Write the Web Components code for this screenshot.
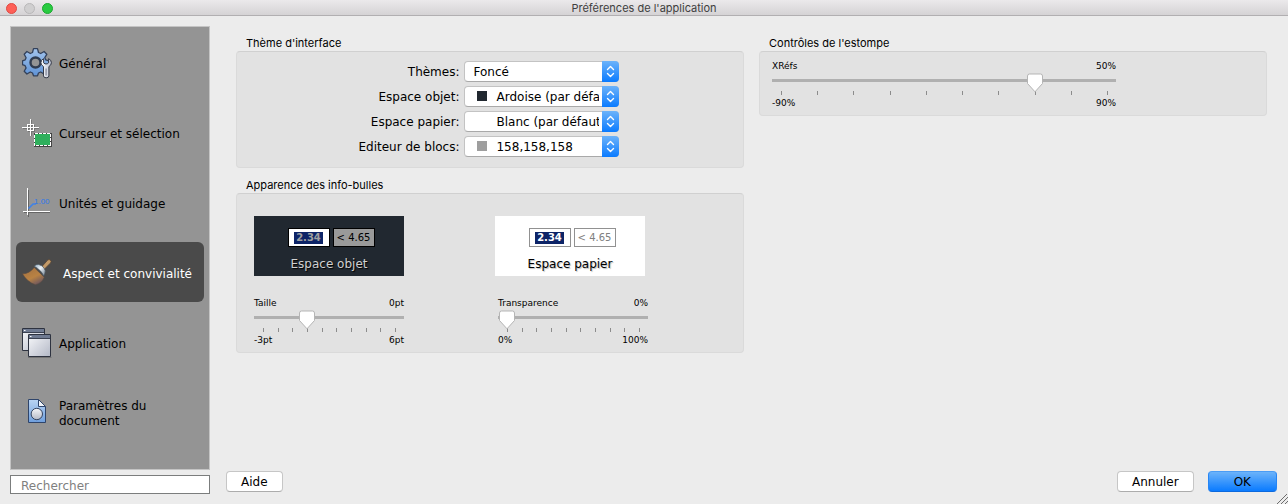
<!DOCTYPE html>
<html lang="fr">
<head>
<meta charset="utf-8">
<title>Préférences de l'application</title>
<style>
	html, body { height: 100%; }

	body {
		margin: 0;
		background: #ececec;
		color: #000;
		font: 12px/15px "DejaVu Sans", Verdana, sans-serif;
	}
</style>
</head>
<body>
<preferences-window caption="Préférences de l'application">
	<side-item slot="nav" icon="gear">Général</side-item>
	<side-item slot="nav" icon="cursor">Curseur et sélection</side-item>
	<side-item slot="nav" icon="units">Unités et guidage</side-item>
	<side-item slot="nav" icon="brush" selected>Aspect et convivialité</side-item>
	<side-item slot="nav" icon="windows">Application</side-item>
	<side-item slot="nav" icon="document">Paramètres du document</side-item>

	<settings-group slot="left" caption="Thème d'interface" layout="form">
		<color-select label="Thèmes:" value="Foncé"></color-select>
		<color-select label="Espace objet:" value="Ardoise (par défaut)" swatch="#212830"></color-select>
		<color-select label="Espace papier:" value="Blanc (par défaut)" swatch="#ffffff"></color-select>
		<color-select label="Editeur de blocs:" value="158,158,158" swatch="#9e9e9e"></color-select>
	</settings-group>

	<settings-group slot="left" caption="Apparence des info-bulles" layout="previews">
		<tooltip-preview theme="dark">Espace objet</tooltip-preview>
		<tooltip-preview theme="light">Espace papier</tooltip-preview>
		<tick-slider slot="controls" label="Taille" unit="pt" min="-3" max="6" value="0"></tick-slider>
		<tick-slider slot="controls" label="Transparence" unit="%" min="0" max="100" value="0"></tick-slider>
	</settings-group>

	<settings-group slot="right" caption="Contrôles de l'estompe" layout="sliders">
		<tick-slider label="XRéfs" unit="%" min="-90" max="90" value="50"></tick-slider>
	</settings-group>

	<push-button slot="help">Aide</push-button>
	<push-button slot="actions">Annuler</push-button>
	<push-button slot="actions" primary>OK</push-button>
</preferences-window>

<script>
const ICONS = {
	gear: /* html */ `
		<svg viewBox="0 0 30 32" width="30" height="32">
			<defs>
				<linearGradient id="g" x1="0" y1="0" x2="0" y2="1">
					<stop offset="0" stop-color="#a3c4ec"/><stop offset="1" stop-color="#5f93d6"/>
				</linearGradient>
				<linearGradient id="w" x1="0" y1="0" x2="1" y2="0">
					<stop offset="0" stop-color="#fff"/><stop offset="1" stop-color="#b9bfd0"/>
				</linearGradient>
			</defs>
			<path d="M11.5 1.7h4l1 3.8 2.2 1 3.4-2 2.7 2.8-2 3.4 1 2.2 3.2.9v3.9l-3.2 1-1 2.2 2 3.3-2.8 2.8-3.3-2-2.2 1-1 2.8h-4l-1-2.8-2.2-1-3.4 2-2.7-2.8 1.9-3.3-1-2.2-2.6-1v-3.9l2.6-.9 1-2.2-1.9-3.4 2.7-2.8 3.4 2 2.2-1z" fill="url(#g)" stroke="#33415a" stroke-width="1.3" stroke-linejoin="round"/>
			<circle cx="13.5" cy="15.5" r="5" fill="#949494" stroke="#303c50" stroke-width="2.4"/>
			<path d="M21.6 11.6v4.2l1.4 1.1h2.2l1.4-1.1v-4.2q2.8 1.4 2.8 4.1 0 2.4-2.5 3.9v9.3q0 1.9-2.7 1.9t-2.7-1.9v-9.3q-2.6-1.5-2.6-3.9 0-2.7 2.7-4.1z" fill="url(#w)" stroke="#343947" stroke-width="1"/>
			<path d="M24.1 21.5v7" stroke="#8c91a1" stroke-width="1.4"/>
		</svg>`,
	cursor: /* html */ `
		<svg viewBox="0 0 30 32" width="30" height="32" fill="none" shape-rendering="crispEdges">
			<path d="M1 11.5h16M9.5 3v16M6.5 8.5h6v6h-6z" stroke="#555" opacity=".5"/>
			<path d="M0 10.5h17M8.5 2v17M5.5 7.5h6v6h-6z" stroke="#fff"/>
			<path d="M12.5 16.5h17v13h-17z" fill="#2faf5c" stroke="#444"/>
			<path d="M12.5 16.5h16v12h-16z" stroke="#444"/>
			<path d="M12.5 16.5h16v12h-16z" stroke="#fff" stroke-dasharray="3 1"/>
		</svg>`,
	units: /* html */ `
		<svg viewBox="0 0 30 32" width="30" height="32">
			<path d="M6.5 3v27M2 25.5h26" stroke="#666" stroke-width="1"/>
			<path d="M5.5 1v27M1 24.5h27" stroke="#fff" shape-rendering="crispEdges"/>
			<path d="M6.5 21.5l4.5-4.5H14" fill="none" stroke="#3f82e8" stroke-width="1.6"/>
			<text x="12" y="17" font-family="Liberation Sans, sans-serif" font-size="8" fill="#2f78e8">1.00</text>
		</svg>`,
	brush: /* html */ `
		<svg viewBox="0 0 30 32" width="30" height="32">
			<defs>
				<linearGradient id="b" x1=".2" y1=".2" x2=".7" y2="1">
					<stop offset="0" stop-color="#a97642"/><stop offset=".5" stop-color="#b98243"/><stop offset="1" stop-color="#6b5660"/>
				</linearGradient>
				<linearGradient id="m" x1="0" y1="0" x2="1" y2="1">
					<stop offset="0" stop-color="#8fa9bd"/><stop offset=".45" stop-color="#eef3f7"/><stop offset="1" stop-color="#74828f"/>
				</linearGradient>
			</defs>
			<path d="M19.5 10l6.1-6.8q1.4-1.3 2.7-.2 1.6 1.5.2 3L22 12.5z" fill="#c39a68" stroke="#5b4635" stroke-width=".8"/>
			<path d="M12.2 10.4Q7.5 16.7.5 16.8q2 4 5.5 6.700q4 3.500 7.500 4.200 6.500-1.500 8.700-7.500z" fill="url(#b)" stroke="#5d4b42" stroke-width=".6"/>
			<path d="M12.200 9.200q1.700-2.200 4.500-1.700 3.300.8 5.300 3.500 1.800 2.600.9 5.200l-1.200 2.800q-2.500-6-9.500-9.800z" fill="url(#m)" stroke="#4a5763" stroke-width=".7"/>
		</svg>`,
	windows: /* html */ `
		<svg viewBox="0 0 30 32" width="30" height="32">
			<defs>
				<linearGradient id="p" x1="0" y1="0" x2="1" y2="1">
					<stop offset="0" stop-color="#f8f9fb"/><stop offset="1" stop-color="#b3b8c6"/>
				</linearGradient>
			</defs>
			<path d="M.5 1.5h22v22H.5z" fill="url(#p)" stroke="#2e3340"/>
			<path d="M1 2h21v3H1z" fill="#6f7a91"/><path d="M1 5.500h21" stroke="#3b4252"/>
			<path d="M2 3.500h1.500" stroke="#fff"/>
			<path d="M6 30.500h23.500" stroke="#555" opacity=".5"/>
			<path d="M6.500 7.500h22v22h-22z" fill="url(#p)" stroke="#2e3340"/>
			<path d="M7 8h21v3H7z" fill="#6f7a91"/><path d="M7 11.500h21" stroke="#3b4252"/>
			<path d="M8 9.500h1.500" stroke="#fff"/>
		</svg>`,
	document: /* html */ `
		<svg viewBox="0 0 30 32" width="30" height="32">
			<defs>
				<linearGradient id="d" x1="0" y1="0" x2="0" y2="1">
					<stop offset="0" stop-color="#b9d4f3"/><stop offset="1" stop-color="#6f9fdd"/>
				</linearGradient>
				<linearGradient id="c" x1="0" y1="0" x2="0" y2="1">
					<stop offset="0" stop-color="#f4f5f8"/><stop offset="1" stop-color="#b4b9c6"/>
				</linearGradient>
			</defs>
			<path d="M6.500 2.500h10l7 7v16h-17z" fill="url(#d)" stroke="#2f456b" stroke-linejoin="round"/>
			<path d="M16.500 2.500v7h7z" fill="#f2f6fb" stroke="#2f456b" stroke-linejoin="round"/>
			<circle cx="14.800" cy="17" r="5.700" fill="url(#c)" stroke="#34435f"/>
		</svg>`
};

window.customElements.define(
	'preferences-window',
	class PreferencesWindow extends HTMLElement {
		constructor() {
			super();
			this.attachShadow({ mode: 'open' });

			const template = document.createElement('template');
			template.innerHTML = /* html */ `
				<style>
					* { box-sizing: border-box; }

					:host {
						display: flex;
						flex-direction: column;
						min-height: 100vh;
						background: #ececec;
					}

					header {
						display: grid;
						grid-template-columns: 1fr auto 1fr;
						align-items: center;
						height: 16px;
						padding: 0 6px;
						background: linear-gradient(#ebe9eb, #d5d3d5);
						border-bottom: 1px solid #b1afb1;
					}

					.lights { display: flex; gap: 7px; }

					.lights button {
						width: 11px;
						height: 11px;
						padding: 0;
						border: 1px solid #df4a43;
						border-radius: 50%;
						background: #fe5f57;
					}
					.lights .minimize { background: #d0cfd0; border-color: #b9b8b9; }
					.lights .zoom { background: #29cb41; border-color: #1aa82f; }

					h1 {
						margin: 0;
						padding-top: 1px;
						font: 11px/15px Inter, sans-serif;
						color: #404040;
					}

					.body {
						flex: 1;
						display: grid;
						grid-template-columns: 200px 1fr;
						gap: 16px;
						padding: 10px 11px 10px 10px;
					}

					aside { display: flex; flex-direction: column; gap: 5px; }

					nav {
						flex: 1;
						display: flex;
						flex-direction: column;
						gap: 10px;
						padding: 5px;
						border: 1px solid #c4c4c4;
						background: #949494;
					}

					input {
						width: 100%;
						height: 19px;
						padding: 2px 10px 0;
						border: 1px solid #7b7d7d;
						background: #fff;
						font: inherit;
						outline: none;
					}
					input::placeholder { color: #7f7f7f; opacity: 1; }

					main { display: flex; flex-direction: column; }

					.columns {
						flex: 1;
						display: grid;
						grid-template-columns: 1fr 1fr;
						gap: 15px;
						padding: 9px 10px 0;
					}

					.column { display: flex; flex-direction: column; gap: 9px; }

					footer {
						display: flex;
						justify-content: space-between;
						padding-bottom: 2px;
					}

					.actions { display: flex; gap: 14px; }

					.grip { position: absolute; right: 0; bottom: 0; }
				</style>
				<header>
					<div class="lights">
						<button aria-label="Fermer"></button>
						<button class="minimize" aria-label="Réduire"></button>
						<button class="zoom" aria-label="Agrandir"></button>
					</div>
					<h1>${ this.getAttribute('caption') }</h1>
				</header>
				<div class="body">
					<aside>
						<nav><slot name="nav"></slot></nav>
						<input type="search" placeholder="Rechercher" aria-label="Rechercher">
					</aside>
					<main>
						<div class="columns">
							<div class="column"><slot name="left"></slot></div>
							<div class="column"><slot name="right"></slot></div>
						</div>
						<footer>
							<slot name="help"></slot>
							<div class="actions"><slot name="actions"></slot></div>
						</footer>
					</main>
				</div>
				<svg class="grip" width="12" height="12" viewBox="0 0 12 12" fill="none">
					<path d="M1 12L11 2M5 12l7-7M9 12l3-3" stroke="#6e6e6e"/>
				</svg>
			`;
			this.shadowRoot.appendChild(template.content.cloneNode(true));
		}
	}
);

window.customElements.define(
	'side-item',
	class SideItem extends HTMLElement {
		constructor() {
			super();
			this.attachShadow({ mode: 'open' });

			const template = document.createElement('template');
			template.innerHTML = /* html */ `
				<style>
					:host { display: block; }

					button {
						display: flex;
						align-items: center;
						gap: 7px;
						width: 100%;
						height: 60px;
						padding: 2px 16px 0 6px;
						border: 0;
						border-radius: 6px;
						background: none;
						color: #000;
						font: inherit;
						text-align: left;
					}

					svg { flex: none; }

					span { padding-top: 2px; }

					:host([selected]) button {
						gap: 11px;
						padding-right: 0;
						background: #4a4a4a;
						color: #fff;
					}
				</style>
				<button ${ this.hasAttribute('selected') ? 'aria-current="page"' : '' }>
					${ ICONS[this.getAttribute('icon')] }
					<span><slot></slot></span>
				</button>
			`;
			this.shadowRoot.appendChild(template.content.cloneNode(true));
		}
	}
);

window.customElements.define(
	'settings-group',
	class SettingsGroup extends HTMLElement {
		constructor() {
			super();
			this.attachShadow({ mode: 'open' });

			const template = document.createElement('template');
			template.innerHTML = /* html */ `
				<style>
					:host { display: block; }

					h2 {
						margin: 0;
						padding-left: 10px;
						font: 11px/16px Inter, sans-serif;
					}

					.box {
						border: 1px solid #dadada;
						border-top-color: #d0d0d0;
						border-radius: 4px;
						background: #e2e2e2;
					}

					:host([layout="form"]) .content {
						display: grid;
						grid-template-columns: auto 155px;
						justify-content: center;
						gap: 4px 5px;
						padding: 9px 2px 10px 0;
					}

					:host([layout="previews"]) .content,
					:host([layout="previews"]) .controls {
						display: grid;
						grid-template-columns: 1fr 1fr;
						gap: 10px;
						padding: 22px 17px 0;
					}

					:host([layout="previews"]) .controls {
						gap: 16px;
						padding: 20px 17px 4px;
					}

					:host([layout="sliders"]) .content { padding: 7px 150px 4px 12px; }
				</style>
				<section>
					<h2>${ this.getAttribute('caption') }</h2>
					<div class="box">
						<div class="content"><slot></slot></div>
						<div class="controls"><slot name="controls"></slot></div>
					</div>
				</section>
			`;
			this.shadowRoot.appendChild(template.content.cloneNode(true));
		}
	}
);

window.customElements.define(
	'color-select',
	class ColorSelect extends HTMLElement {
		constructor() {
			super();
			this.attachShadow({ mode: 'open' });

			const swatch = this.getAttribute('swatch');

			const template = document.createElement('template');
			template.innerHTML = /* html */ `
				<style>
					:host { display: contents; }

					label { text-align: right; line-height: 23px; height: 21px; }

					.field {
						position: relative;
						height: 21px;
						box-sizing: border-box;
						border: 1px solid #c3c3c3;
						border-bottom-color: #a9a9a9;
						border-radius: 4px;
						background: #fff;
					}

					select {
						appearance: none;
						display: block;
						width: 100%;
						height: 19px;
						padding: 1px 19px 0 ${ swatch ? 31 : 8 }px;
						border: 0;
						background: none;
						color: inherit;
						font: inherit;
						outline: none;
						text-overflow: clip;
					}

					.swatch {
						position: absolute;
						left: 12px;
						top: 4px;
						width: 10px;
						height: 10px;
						background: ${ swatch || 'none' };
					}

					.arrows {
						position: absolute;
						top: -1px;
						right: -1px;
						border-radius: 0 4px 4px 0;
						background: linear-gradient(#6cb3fa, #0a7bff);
						pointer-events: none;
					}
				</style>
				<label for="select">${ this.getAttribute('label') }</label>
				<div class="field">
					<select id="select"><option>${ this.getAttribute('value') }</option></select>
					<span class="swatch"></span>
					<svg class="arrows" width="17" height="21" viewBox="0 0 17 21" fill="none">
						<path d="M5.500 8.500l3-3 3 3M5.500 12.500l3 3 3-3" stroke="#fff" stroke-width="1.400" stroke-linecap="round" stroke-linejoin="round"/>
					</svg>
				</div>
			`;
			this.shadowRoot.appendChild(template.content.cloneNode(true));
		}
	}
);

window.customElements.define(
	'tooltip-preview',
	class TooltipPreview extends HTMLElement {
		constructor() {
			super();
			this.attachShadow({ mode: 'open' });

			const template = document.createElement('template');
			template.innerHTML = /* html */ `
				<style>
					:host {
						display: flex;
						flex-direction: column;
						align-items: center;
						gap: 10px;
						box-sizing: border-box;
						width: 150px;
						height: 60px;
						padding-top: 12px;
						background: #fff;
						text-shadow: 1px 1px 1px #bbb;
						--edge: #919191;
						--value: #fff;
						--range: #fff;
						--range-text: #808080;
					}

					:host([theme="dark"]) {
						background: #212830;
						color: #d0d0d0;
						text-shadow: 1px 1px 1px #000;
						--edge: #000;
						--value: #a0a0a0;
						--range: #9a9a9a;
						--range-text: #000;
					}

					.tips {
						display: flex;
						gap: 3px;
						padding-left: 4px;
						font-size: 10px;
						line-height: 12px;
						text-shadow: none;
					}

					.tips span {
						box-sizing: border-box;
						display: flex;
						align-items: center;
						justify-content: center;
						width: 42px;
						height: 19px;
						border: 1px solid var(--edge);
						background: var(--range);
						color: var(--range-text);
					}

					.tips .value { background: #fff; }

					b {
						padding: 0 2px;
						background: #0d2467;
						color: var(--value);
					}
				</style>
				<div class="tips">
					<span class="value"><b>2.34</b></span>
					<span>&lt; 4.65</span>
				</div>
				<div><slot></slot></div>
			`;
			this.shadowRoot.appendChild(template.content.cloneNode(true));
		}
	}
);

window.customElements.define(
	'tick-slider',
	class TickSlider extends HTMLElement {
		constructor() {
			super();
			this.attachShadow({ mode: 'open' });

			const min = this.getAttribute('min');
			const max = this.getAttribute('max');
			const value = this.getAttribute('value');
			const unit = this.getAttribute('unit');

			const template = document.createElement('template');
			template.innerHTML = /* html */ `
				<style>
					:host {
						display: block;
						font-size: 9px;
						line-height: 15px;
					}

					:host([slot="controls"]) { width: 150px; }

					.row { display: flex; justify-content: space-between; }

					input {
						appearance: none;
						position: relative;
						display: block;
						width: 100%;
						height: 20px;
						margin: -1px 0 0;
						background: none;
					}

					input::-webkit-slider-runnable-track {
						height: 20px;
						background: linear-gradient(#b0b0b0, #b0b0b0) 0 6px / 100% 3px no-repeat;
					}

					input::-webkit-slider-thumb {
						appearance: none;
						width: 18px;
						height: 20px;
						background: url("data:image/svg+xml,%3Csvg xmlns='http://www.w3.org/2000/svg' width='18' height='20'%3E%3Cpath d='M3.5 1h11q2 0 2 2v7.5L9 18.8l-7.5-8.3V3q0-2 2-2z' fill='%23fff' stroke='%23b5b5b5'/%3E%3C/svg%3E") no-repeat;
					}

					.ticks {
						display: flex;
						justify-content: space-between;
						height: 4px;
						margin: -2px 0 1px;
						padding: 0 8px 0 9px;
					}

					.ticks i { width: 1px; background: #8c8c8c; }
				</style>
				<div class="row">
					<label for="range">${ this.getAttribute('label') }</label>
					<output for="range">${ value }${ unit }</output>
				</div>
				<input id="range" type="range" min="${ min }" max="${ max }" value="${ value }">
				<div class="ticks">${ '<i></i>'.repeat(10) }</div>
				<div class="row"><span>${ min }${ unit }</span><span>${ max }${ unit }</span></div>
			`;
			this.shadowRoot.appendChild(template.content.cloneNode(true));

			const input = this.shadowRoot.querySelector('input');
			const output = this.shadowRoot.querySelector('output');
			input.addEventListener('input', () => { output.textContent = input.value + unit; });
		}
	}
);

window.customElements.define(
	'push-button',
	class PushButton extends HTMLElement {
		constructor() {
			super();
			this.attachShadow({ mode: 'open' });

			const template = document.createElement('template');
			template.innerHTML = /* html */ `
				<style>
					:host { display: block; }

					button {
						height: 21px;
						padding: 1px 14px 0;
						border: 1px solid #c6c6c6;
						border-bottom-color: #acacac;
						border-radius: 4px;
						background: #fff;
						color: #000;
						font: inherit;
					}

					:host([primary]) button {
						padding: 1px 25px 0;
						border-color: #4a9cf5 #2585f5 #0c69dd;
						background: linear-gradient(#6cb3fa, #0a7bff);
					}
				</style>
				<button><slot></slot></button>
			`;
			this.shadowRoot.appendChild(template.content.cloneNode(true));
		}
	}
);
</script>
</body>
</html>
